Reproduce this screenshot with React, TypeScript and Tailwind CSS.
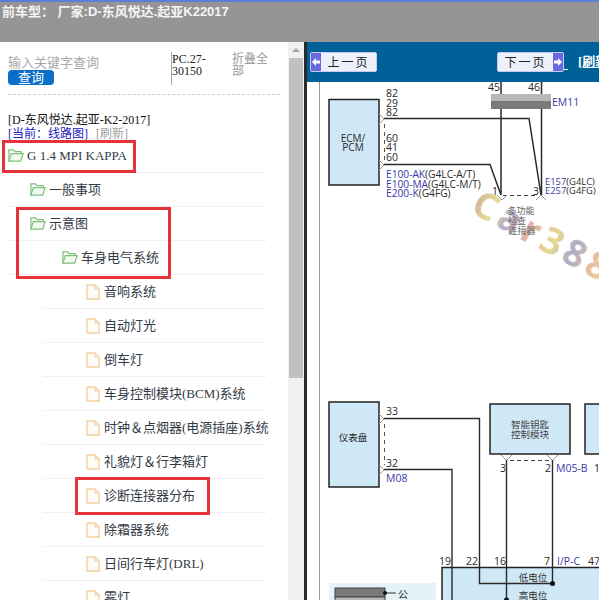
const TREE = [
  { label: 'G 1.4 MPI KAPPA', kind: 'folder', left: 8, pad: 0 },
  { label: '一般事项', kind: 'folder', left: 8, pad: 22 },
  { label: '示意图', kind: 'folder', left: 8, pad: 22 },
  { label: '车身电气系统', kind: 'folder', left: 8, pad: 54 },
  { label: '音响系统', kind: 'file', left: 43, pad: 43 },
  { label: '自动灯光', kind: 'file', left: 43, pad: 43 },
  { label: '倒车灯', kind: 'file', left: 43, pad: 43 },
  { label: '车身控制模块(BCM)系统', kind: 'file', left: 43, pad: 43 },
  { label: '时钟＆点烟器(电源插座)系统', kind: 'file', left: 43, pad: 43 },
  { label: '礼貌灯＆行李箱灯', kind: 'file', left: 43, pad: 43 },
  { label: '诊断连接器分布', kind: 'file', left: 43, pad: 43 },
  { label: '除霜器系统', kind: 'file', left: 43, pad: 43 },
  { label: '日间行车灯(DRL)', kind: 'file', left: 43, pad: 43 },
  { label: '雾灯', kind: 'file', left: 43, pad: 43 },
];

function FolderIcon() {
  return (
    <svg width="16" height="15" viewBox="0 0 17 15" fill="none" className="shrink-0">
      <path d="M1 13.5V1.5h5l1.5 2H14v2" stroke="#7cc07c" strokeWidth="1.3" />
      <path d="M1 13.5L3.5 5.5H16l-2.5 8z" fill="#f2faf2" stroke="#7cc07c" strokeWidth="1.3" />
    </svg>
  );
}

function FileIcon() {
  return (
    <svg width="14" height="16" viewBox="0 0 14 16" fill="none" className="shrink-0">
      <path d="M1 1h8l4 4v10H1z" fill="#fffdf9" stroke="#f5cf9f" strokeWidth="1.4" />
      <path d="M9 1v4h4" stroke="#f5cf9f" strokeWidth="1.2" />
    </svg>
  );
}

function TreeRow({ label, kind, left, pad }: { label: string; kind: string; left: number; pad: number }) {
  return (
    <li
      className="h-[34px] flex items-center gap-[3px] border-b border-[#f1f1f1] text-[13px] text-[#333a45] whitespace-nowrap"
      style={{ marginLeft: left, paddingLeft: pad, width: 267 - left }}
    >
      {kind === 'folder' ? <FolderIcon /> : <FileIcon />}
      <span className={kind === 'file' ? 'ml-[1px]' : ''}>{label}</span>
    </li>
  );
}

function Sidebar() {
  return (
    <div className="w-[288px] h-full shrink-0 overflow-hidden bg-white relative font-['Liberation_Serif','Noto_Sans_CJK_SC',serif]">
      <div className="flex h-[33px] mt-[10px] ml-2 mr-[10px]">
        <div className="w-[163px] pt-[2px]">
          <div className="text-[13px] leading-[16px] text-[#a9a9a9] font-['Noto_Sans_CJK_SC',sans-serif]">输入关键字查询</div>
          <div className="w-[46px] h-[15px] rounded-[4px] bg-[#0a6fc6] text-white text-[13px] leading-[15px] text-center">查询</div>
        </div>
        <div className="w-[61px] border-l border-[#aaaaaa] text-[12px] leading-[12px] pt-[1px] text-[#222] h-[33px]">PC.27-<br />30150</div>
        <div className="w-[38px] text-[12px] leading-[12px] text-[#999] pt-[1px]">折叠全部</div>
      </div>
      <div className="mx-2 mt-[9px] border-t border-dashed border-[#cfcfcf]" />
      <div className="ml-2 mt-[18px] text-[12px] leading-[14px] text-[#111]">[D-东风悦达.起亚-K2-2017]</div>
      <div className="ml-2 text-[12px] leading-[14px] text-[#1a1ac0]">
        [当前：线路图]<span className="ml-2 text-[#a0a0a0]">[刷新]</span>
      </div>
      <ul className="mt-[-2px]">
        {TREE.map((r) => <TreeRow key={r.label} {...r} />)}
      </ul>
      <div className="absolute left-[2px] top-[98px] w-[134px] h-[33px] border-[3px] border-[#e5333a]" />
      <div className="absolute left-[16px] top-[165px] w-[155px] h-[72px] border-[3px] border-[#e5333a]" />
      <div className="absolute left-[75px] top-[435px] w-[135px] h-[38px] border-[3px] border-[#e5333a]" />
    </div>
  );
}

function Scrollbar() {
  return (
    <div className="w-[16px] h-full shrink-0 bg-[#f1f1f1] flex flex-col items-center">
      <div className="h-[16px] flex items-center justify-center">
        <div className="w-0 h-0 border-x-[4px] border-x-transparent border-b-[4px] border-b-[#a3a3a3]" />
      </div>
      <div className="w-[14px] h-[320px] bg-[#c1c1c1]" />
    </div>
  );
}

function PageBtn({ text, dir }: { text: string; dir: 'prev' | 'next' }) {
  const arrow = (
    <div className="w-[10px] h-full bg-[#6a6ae0] flex items-center justify-center">
      <svg width="8" height="8" viewBox="0 0 8 8">
        <path d={dir === 'prev' ? 'M0 4l4-4v2.500h4v3H4V8z' : 'M8 4L4 0v2.500H0v3h4V8z'} fill="#fff" />
      </svg>
    </div>
  );
  return (
    <div className="w-[67px] h-[20px] shrink-0 flex rounded-[2px] border border-[#c3ccf2] bg-[#eef0fb] text-[12px] text-[#222] whitespace-nowrap font-['Noto_Sans_CJK_SC',sans-serif]">
      {dir === 'prev' && arrow}
      <div className="flex-1 text-center leading-[18px] tracking-[2px]">{text}</div>
      {dir === 'next' && arrow}
    </div>
  );
}

const BLUE = '#3a3aa8';
const INK = '#2a2a2a';

function Pin({ x, y, t, c = INK, a = 'start', s = 10.5 }: { x: number; y: number; t: string; c?: string; a?: 'start' | 'middle'; s?: number }) {
  return <text x={x} y={y} fill={c} fontSize={s} textAnchor={a} fontFamily="'Open Sans','Noto Sans CJK SC',sans-serif">{t}</text>;
}

function Tag({ x, y, id, rest, s = 10.2 }: { x: number; y: number; id: string; rest: string; s?: number }) {
  return (
    <text x={x} y={y} fontSize={s} fontFamily="'Open Sans',sans-serif" fill={INK}>
      <tspan fill={BLUE}>{id}</tspan>{rest}
    </text>
  );
}

function Diagram() {
  return (
    <svg viewBox="307 82 292 518" width="292" height="518" className="block">
      <defs>
        <linearGradient id="wm" x1="0" y1="0" x2="1" y2="0">
          <stop offset="0" stopColor="#c9a48c" />
          <stop offset="0.12" stopColor="#e3d77c" />
          <stop offset="0.25" stopColor="#a79bc4" />
          <stop offset="0.42" stopColor="#e2a88c" />
          <stop offset="0.58" stopColor="#e0d47c" />
          <stop offset="0.72" stopColor="#9d9dc0" />
          <stop offset="0.86" stopColor="#e6b08e" />
          <stop offset="1" stopColor="#d8d07e" />
        </linearGradient>
        <filter id="soft"><feGaussianBlur stdDeviation="0.6" /></filter>
      </defs>
      <path d="M319.500 82V600" stroke="#9a9a9a" strokeWidth="1" />

      {/* ECM block */}
      <rect x="329" y="99.500" width="50" height="85.500" fill="#cfe8f6" stroke="#222" strokeWidth="1.500" />
      <Pin x={353} y={142} t="ECM/" a="middle" s={10} />
      <Pin x={353} y={151} t="PCM" a="middle" s={10} />
      <Pin x={386} y={97} t="82" />
      <Pin x={386} y={107} t="29" />
      <Pin x={386} y={116} t="82" />
      <Pin x={386} y={142} t="60" />
      <Pin x={386} y={151} t="41" />
      <Pin x={386} y={161} t="60" />
      <path d="M379 114l5 5-5 5M379 160l5 5-5 5" fill="none" stroke="#999" />
      <path d="M384.500 124V160" stroke="#555" strokeDasharray="4 4" />
      <path d="M384 118.500H529L541 195M384 164.500H490L501 195M501 82V195M541.500 82V195" fill="none" stroke={INK} strokeWidth="1.500" />
      <path d="M503 195.500H538" stroke="#444" strokeDasharray="4 3" />
      <rect x="491" y="94" width="60" height="7" fill="#b7b7b7" />
      <rect x="491" y="101" width="60" height="8" fill="#7a7a7a" />
      <Pin x={488} y={91} t="45" />
      <Pin x={528} y={91} t="46" />
      <Pin x={552} y={106} t="EM11" c={BLUE} />
      <Tag x={386} y={178} id="E100-AK" rest="(G4LC-A/T)" />
      <Tag x={386} y={188} id="E100-MA" rest="(G4LC-M/T)" />
      <Tag x={386} y={197} id="E200-K" rest="(G4FG)" />
      <Tag x={545} y={185} id="E157" rest="(G4LC)" s={9.4} />
      <Tag x={545} y={194} id="E257" rest="(G4FG)" s={9.4} />
      <Pin x={492} y={195} t="1" />
      <Pin x={533} y={195} t="3" />
      <path d="M497 195l5 5 5-5M536 200l5-5 5 5" fill="none" stroke="#999" />
      <text x="469" y="212" fontSize="38" fontWeight="700" letterSpacing="4" fontFamily="'Open Sans',sans-serif" fill="url(#wm)" opacity="0.85" filter="url(#soft)" transform="rotate(28 469 212)">Car388</text>
      <Pin x={521} y={214} t="多功能" a="middle" s={9} c="#666" />
      <Pin x={517} y={224} t="检查" a="middle" s={9} c="#666" />
      <Pin x={522} y={234} t="连接器" a="middle" s={9} c="#666" />

      {/* cluster */}
      <rect x="329" y="402" width="50" height="85" fill="#cfe8f6" stroke="#222" strokeWidth="1.500" />
      <Pin x={353} y={441} t="仪表盘" a="middle" s={9.500} />
      <Pin x={386} y={415} t="33" />
      <Pin x={386} y={467} t="32" />
      <Pin x={386} y={482} t="M08" c={BLUE} />
      <path d="M379 414l5 5-5 5M379 465l5 5-5 5" fill="none" stroke="#999" />
      <path d="M384.500 424V465" stroke="#555" strokeDasharray="4 4" />

      {/* smart key */}
      <rect x="490" y="404" width="80" height="50" fill="#cfe8f6" stroke="#222" strokeWidth="1.500" />
      <Pin x={530} y={428} t="智能钥匙" a="middle" s={9.500} c="#444" />
      <Pin x={530} y={438} t="控制模块" a="middle" s={9.500} c="#444" />
      <rect x="585" y="404" width="20" height="50" fill="#cfe8f6" stroke="#222" strokeWidth="1.500" />
      <path d="M501 455l5.500 5.500 5.500-5.500M547 455l5.500 5.500 5.500-5.500" fill="none" stroke="#999" />
      <path d="M510 460.500H549" stroke="#444" strokeDasharray="4 3" />
      <Pin x={500} y={472} t="3" />
      <Pin x={545} y={472} t="2" />
      <Pin x={556} y={472} t="M05-B" c={BLUE} />
      <Pin x={594} y={472} t="1" />

      {/* bottom module */}
      <rect x="442" y="567.500" width="170" height="50" fill="#cfe8f6" stroke="#222" strokeWidth="1.500" />
      <path d="M384 418.500H479.500V583.500H552.500M384 469.500H452V600M506.500 460V600M552.500 460V583" fill="none" stroke={INK} strokeWidth="1.400" />
      <circle cx="552.500" cy="583.500" r="2.500" fill="#111" />
      <circle cx="506.500" cy="600" r="2.500" fill="#111" />
      <Pin x={533} y={581} t="低电位" a="middle" s={9.500} c="#333" />
      <Pin x={533} y={599} t="高电位" a="middle" s={9.500} c="#333" />
      <Pin x={439} y={565} t="19" />
      <Pin x={466} y={565} t="22" />
      <Pin x={494} y={565} t="16" />
      <Pin x={544} y={565} t="7" />
      <Pin x={557} y={565} t="I/P-C" c={BLUE} />
      <Pin x={588} y={565} t="47" />

      {/* legend */}
      <rect x="329" y="583" width="107" height="17" fill="#e6f2fa" />
      <rect x="335" y="588" width="50" height="9" fill="#7a7a7a" stroke="#444" />
      <rect x="335" y="597" width="50" height="6" fill="#b7b7b7" stroke="#444" />
      <path d="M385 593H396" stroke="#333" />
      <circle cx="385" cy="593" r="2" fill="#111" />
      <Pin x={398} y={598} t="公" s={10} />
    </svg>
  );
}

function Viewer() {
  return (
    <div className="w-[292px] h-full shrink-0 flex flex-col bg-white overflow-hidden">
      <div className="h-[40px] shrink-0 bg-[#006199] flex items-center pl-[3px] pb-[1px]">
        <PageBtn text="上一页" dir="prev" />
        <div className="ml-[120px] shrink-0"><PageBtn text="下一页" dir="next" /></div>
        <span className="w-[4px] h-[1px] shrink-0 bg-white self-end mb-[11px]" />
        <span className="ml-[10px] shrink-0 text-[13px] font-bold text-white underline font-['Liberation_Serif','Noto_Sans_CJK_SC',serif] whitespace-nowrap">[刷新]</span>
      </div>
      <Diagram />
    </div>
  );
}

export default function App() {
  return (
    <div className="w-[599px] h-[600px] overflow-hidden flex flex-col bg-white">
      <div className="h-[42px] shrink-0 bg-[#959595] border-t-[2px] border-[#5b7fd6]">
        <div className="pl-[2px] pt-[1px] text-[13px] leading-[18px] font-bold text-[#f4f4f4] whitespace-nowrap font-['Liberation_Sans','Noto_Sans_CJK_SC',sans-serif]">前车型： 厂家:D-东风悦达.起亚K22017</div>
      </div>
      <div className="flex-1 min-h-0 flex">
        <Sidebar />
        <Scrollbar />
        <div className="w-[3px] h-full shrink-0 bg-[#2a2a2a]" />
        <Viewer />
      </div>
    </div>
  );
}
